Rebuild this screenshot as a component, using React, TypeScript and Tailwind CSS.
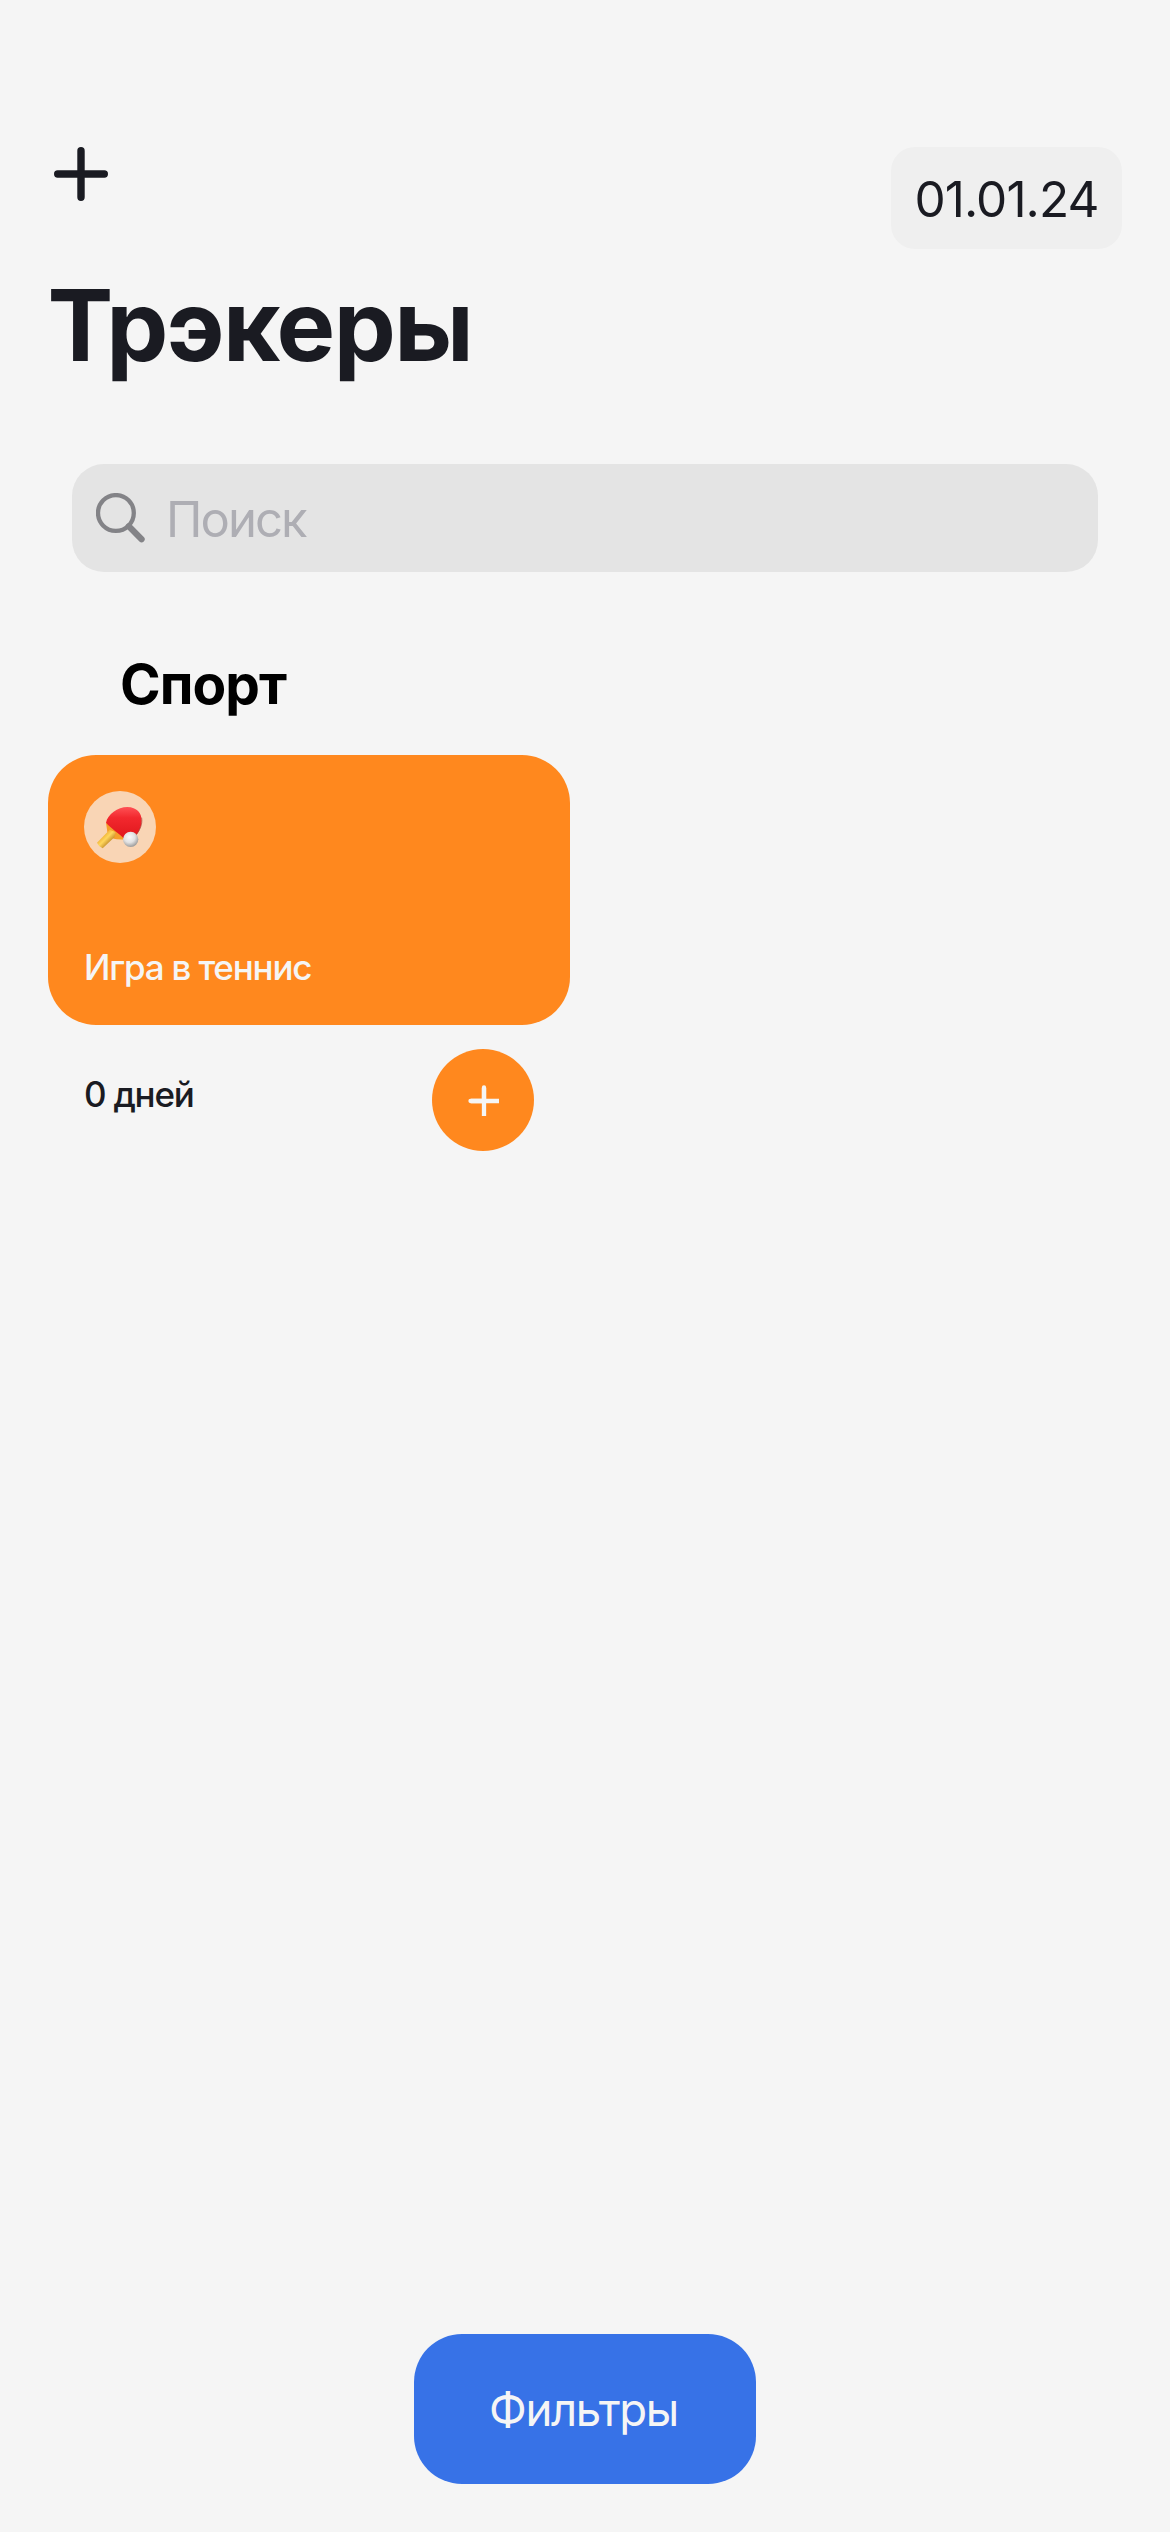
function AddIcon() {
  return (
    <svg className="block h-[54px] w-[54px]" viewBox="0 0 54 54" fill="none">
      <path d="M27 3.7V50.3M3.7 27H50.3" stroke="#1A1B22" strokeWidth="7.4" strokeLinecap="round" />
    </svg>
  );
}

function SearchIcon() {
  return (
    <svg className="block h-[50px] w-[50px]" viewBox="0 0 50 50" fill="none" stroke="#838387">
      <circle cx="19.9" cy="20" r="17.9" strokeWidth="4.3" />
      <path d="M32.8 33.3L45.6 46.2" strokeWidth="6.2" strokeLinecap="round" />
    </svg>
  );
}

function PaddleIcon() {
  return (
    <svg className="block h-[72px] w-[72px]" viewBox="42 63 216 216">
      <defs>
        <linearGradient id="rubber" x1="0" y1="0" x2="0" y2="1">
          <stop offset="0" stopColor="#FF5054" />
          <stop offset="0.35" stopColor="#F2282E" />
          <stop offset="1" stopColor="#E0171C" />
        </linearGradient>
        <linearGradient id="wood" x1="0" y1="0" x2="1" y2="1">
          <stop offset="0.2" stopColor="#E59A1C" />
          <stop offset="0.48" stopColor="#FFD75E" />
          <stop offset="0.8" stopColor="#A9690F" />
        </linearGradient>
        <radialGradient id="ball" cx="0.42" cy="0.35" r="0.65">
          <stop offset="0" stopColor="#FAFAFA" />
          <stop offset="0.55" stopColor="#E2E2E2" />
          <stop offset="1" stopColor="#9C9C9C" />
        </radialGradient>
      </defs>
      <path d="M108 158L112 186Q122 208 140 208L168 209L172 198Z" fill="#F59E2B" />
      <path d="M119 179L137 187L133 202L98 235Q86 230 81 218Z" fill="url(#wood)" />
      <path
        d="M108 158C113 133 143 111 172 111C201 112 215 129 215 152C215 173 203 193 192 204L160 204C147 190 124 176 108 158Z"
        fill="url(#rubber)"
      />
      <path d="M197 196C210 180 218 163 215 143" fill="none" stroke="#A84A40" strokeWidth="2" />
      <circle cx="182" cy="208" r="23" fill="url(#ball)" />
    </svg>
  );
}

function TrackerCard() {
  return (
    <article className="w-[522px]">
      <div className="flex h-[270px] flex-col justify-between rounded-[48px] bg-[#FF881E] px-9 pt-9 pb-[31px]">
        <div className="h-[72px] w-[72px] overflow-hidden rounded-full bg-[#F9D5B5]">
          <PaddleIcon />
        </div>
        <p className="text-[35px] leading-[54px] font-medium tracking-[-1.2px] text-[#F5F5F5]">Игра в теннис</p>
      </div>
      <div className="flex items-start justify-between pt-6 pr-9 pl-9">
        <p className="mt-[18px] text-[35px] leading-[54px] font-medium tracking-[-1.26px]">0 дней</p>
        <button className="flex h-[102px] w-[102px] items-center justify-center rounded-full bg-[#FF881E]">
          <svg className="mt-0.5 ml-0.5 block h-8 w-8" viewBox="0 0 32 32" fill="none" stroke="#F5F5F5">
            <path d="M16 3V31M3 16H31" strokeWidth="4.3" />
            <path d="M16 2.5V16M2.5 16H16" strokeWidth="4.3" strokeLinecap="round" />
          </svg>
        </button>
      </div>
    </article>
  );
}

export default function App() {
  return (
    <main className="flex h-[2532px] w-[1170px] flex-col bg-[#F5F5F5] font-['Inter',sans-serif] text-[#1A1B22]">
      <header className="flex h-[265px] shrink-0 items-start justify-between pt-[147px] pr-12 pl-[54px]">
        <button>
          <AddIcon />
        </button>
        <div className="flex h-[102px] w-[231px] items-center justify-center rounded-[24px] bg-[#EFEFEF] pt-1 text-[49.5px] leading-none tracking-[-0.91px]">
          01.01.24
        </div>
      </header>
      <h1 className="ml-[47.5px] text-[98.6px] leading-[120px] font-bold tracking-[-1.59px]">Трэкеры</h1>
      <div className="mx-[72px] mt-[79px] flex h-[108px] items-center rounded-[32px] bg-[#E4E4E4] pl-6">
        <SearchIcon />
        <span className="ml-[20px] pt-0.5 text-[49px] leading-none tracking-[-1.95px] text-[#AEAEB4]">Поиск</span>
      </div>
      <h2 className="mt-[82px] ml-[120px] text-[55px] leading-[60px] font-bold tracking-[-0.95px] text-black">
        Спорт
      </h2>
      <section className="mt-[41px] ml-12">
        <TrackerCard />
      </section>
      <button className="mt-auto mb-12 flex h-[150px] w-[342px] items-center justify-center self-center rounded-[48px] bg-[#3772E7] pt-0.5 pr-[3px] text-[45.5px] leading-none tracking-[-1.4px] text-[#F5F5F5]">
        Фильтры
      </button>
    </main>
  );
}
